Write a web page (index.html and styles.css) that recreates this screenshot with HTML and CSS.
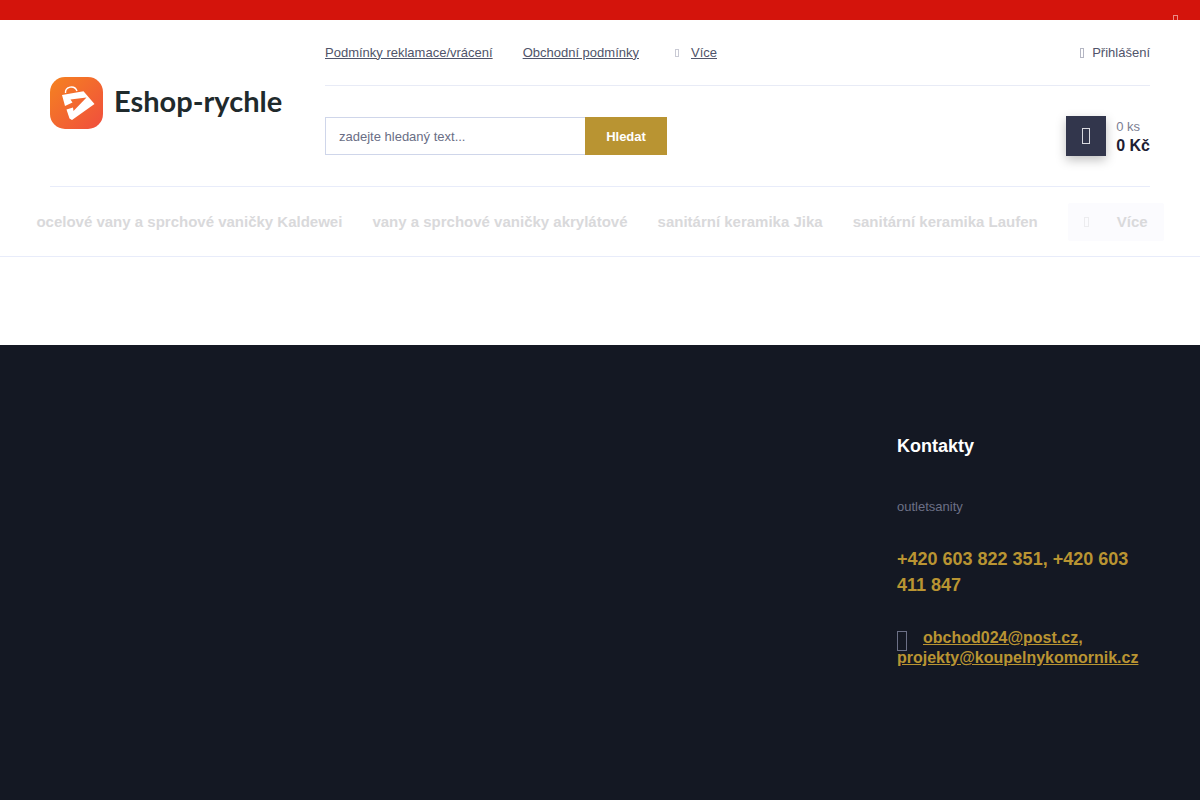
FILE: index.html
```html
<!DOCTYPE html>
<html lang="cs">
<head>
    <meta charset="UTF-8">
    <meta name="viewport" content="width=device-width, initial-scale=1.0">
    <title>Eshop-rychle</title>
    <link rel="stylesheet" href="styles.css">
</head>
<body>

    <div class="notice">
        <button type="button" class="notice-close" aria-label="Zavřít"><span class="glyph"></span></button>
    </div>

    <header class="header">
        <a href="#" class="logo">
            <svg class="logo-mark" viewBox="0 0 53 53" aria-hidden="true">
                <defs>
                    <linearGradient id="logo-fill" x1="0" y1="0" x2="1" y2="1">
                        <stop offset="0" stop-color="#f58220"/>
                        <stop offset="1" stop-color="#f04e3e"/>
                    </linearGradient>
                </defs>
                <rect width="53" height="52" rx="15" fill="url(#logo-fill)"/>
                <path d="M15.500 16C15 9.500 24.500 7.500 27 14" fill="none" stroke="#fff" stroke-width="1.400"/>
                <path d="M12 18L33.500 14.300L44.500 27L22 43L19.500 41.500L16.500 32.500L23 30.500L23.500 34L36.500 20.500L20.500 22.500L22.500 25.500L15 29Z" fill="#fff"/>
            </svg>
            <span class="logo-text">Eshop-rychle</span>
        </a>

        <div class="header-main">
            <div class="header-top">
                <nav class="info-links">
                    <a href="#">Podmínky reklamace/vrácení</a>
                    <a href="#">Obchodní podmínky</a>
                    <div class="info-more"><span class="glyph"></span><a href="#">Více</a></div>
                </nav>
                <a href="#" class="login"><span class="glyph"></span>Přihlášení</a>
            </div>
            <div class="header-bottom">
                <form class="search">
                    <input type="text" placeholder="zadejte hledaný text..." aria-label="Hledat">
                    <button type="submit">Hledat</button>
                </form>
                <a href="#" class="cart">
                    <span class="cart-icon"><span class="glyph"></span></span>
                    <span class="cart-info">
                        <span class="cart-count">0 ks</span>
                        <strong class="cart-price">0 Kč</strong>
                    </span>
                </a>
            </div>
        </div>
    </header>

    <nav class="menu">
        <a href="#">ocelové vany a sprchové vaničky Kaldewei</a>
        <a href="#">vany a sprchové vaničky akrylátové</a>
        <a href="#">sanitární keramika Jika</a>
        <a href="#">sanitární keramika Laufen</a>
        <a href="#" class="menu-more"><span class="glyph"></span>Více</a>
    </nav>

    <footer class="footer">
        <div class="contacts">
            <h2>Kontakty</h2>
            <p class="contact-name">outletsanity</p>
            <p class="contact-phone">+420 603 822 351, +420 603 411 847</p>
            <p class="contact-mail"><span class="glyph"></span><a href="#">obchod024@post.cz, projekty@koupelnykomornik.cz</a></p>
        </div>
    </footer>

</body>
</html>
```
FILE: styles.css
```css
* {
    box-sizing: border-box;
}
body {
    margin: 0;
    min-height: 100vh;
    display: flex;
    flex-direction: column;
    font-family: "Liberation Sans", Arial, sans-serif;
    font-size: 13px;
    line-height: 20px;
    color: #50546a;
    background: #fff;
}
a {
    color: inherit;
}

/* empty icon box */
.glyph {
    display: inline-block;
    flex: none;
    width: 4px;
    height: 8px;
    border: 1px solid currentColor;
}

.notice {
    height: 20px;
    padding: 14px 22px 0;
    overflow: hidden;
    text-align: right;
    background: #d4140c;
}
.notice-close {
    display: inline-block;
    padding: 0;
    border: 0;
    background: none;
    color: #ea8a86;
    line-height: 10px;
    vertical-align: top;
    cursor: pointer;
}
.notice-close .glyph {
    width: 5px;
}

.header {
    display: flex;
    gap: 40px;
    margin: 0 50px;
    border-bottom: 1px solid #e8ecfa;
}
.logo {
    display: flex;
    align-items: center;
    gap: 11px;
    width: 235px;
    text-decoration: none;
}
.logo-mark {
    flex: none;
    width: 53px;
    height: 53px;
}
.logo-text {
    padding-bottom: 4px;
    font-family: Lato, sans-serif;
    font-size: 29px;
    line-height: 36px;
    font-weight: bold;
    color: #1f2a2c;
    white-space: nowrap;
}
.header-main {
    flex: 1;
}
.header-top {
    display: flex;
    justify-content: space-between;
    align-items: center;
    height: 66px;
    border-bottom: 1px solid #e8ebf6;
}
.info-links {
    display: flex;
    gap: 30px;
}
.info-more {
    display: flex;
    align-items: center;
    gap: 12px;
    padding-left: 6px;
}
.info-more .glyph {
    color: #c9cad4;
}
.login {
    display: flex;
    align-items: center;
    gap: 8px;
    text-decoration: none;
}
.login .glyph {
    height: 10px;
    color: #b4b6c3;
}
.header-bottom {
    display: flex;
    justify-content: space-between;
    align-items: center;
    height: 100px;
}
.search {
    display: flex;
    width: 342px;
    height: 38px;
}
.search input {
    flex: 1;
    min-width: 0;
    padding: 2px 13px 0;
    border: 1px solid #cfd6ea;
    border-right: 0;
    border-radius: 0;
    font: inherit;
    color: #50546a;
}
.search input::placeholder {
    color: #6a6e85;
    opacity: 1;
}
.search button {
    width: 82px;
    padding: 2px 0 0;
    border: 0;
    font: inherit;
    font-weight: bold;
    color: #fff;
    background: #b99432;
    cursor: pointer;
}
.cart {
    display: flex;
    align-items: center;
    gap: 10px;
    text-decoration: none;
}
.cart-icon {
    display: flex;
    align-items: center;
    justify-content: center;
    width: 40px;
    height: 40px;
    color: #d9dae0;
    background: #32364c;
    box-shadow: 0 4px 10px rgba(0, 0, 0, 0.25);
}
.cart-icon .glyph {
    width: 8px;
    height: 16px;
}
.cart-info {
    display: flex;
    flex-direction: column;
    padding-top: 2px;
}
.cart-count {
    line-height: 18px;
    color: #7b7e92;
}
.cart-price {
    font-size: 16px;
    color: #1d2033;
}

.menu {
    display: flex;
    justify-content: center;
    align-items: center;
    gap: 30px;
    height: 70px;
    border-bottom: 1px solid #e8ecfa;
    font-size: 15px;
    font-weight: bold;
    color: #d9d9db;
    white-space: nowrap;
}
.menu a {
    text-decoration: none;
}
.menu-more {
    display: flex;
    align-items: center;
    gap: 28px;
    height: 38px;
    padding: 0 16px;
    border-radius: 2px;
    background: #fbfbfe;
}
.menu-more .glyph {
    width: 5px;
    height: 10px;
    color: #ececef;
}

.footer {
    flex: 1;
    display: flex;
    justify-content: flex-end;
    margin-top: 88px;
    padding: 88px 50px;
    background: #141823;
}
.contacts {
    width: 253px;
}
.contacts h2 {
    margin: 0 0 38px;
    font-size: 18px;
    line-height: 26px;
    color: #fff;
}
.contacts p {
    margin: 0;
}
.contact-name {
    color: #6c7086;
}
.contacts .contact-phone {
    margin: 29px 0 30px;
    font-size: 18px;
    line-height: 26px;
    font-weight: bold;
    color: #b99432;
}
.contact-mail {
    font-size: 16px;
    font-weight: bold;
    color: #b99432;
}
.contact-mail .glyph {
    float: left;
    width: 10px;
    height: 20px;
    margin: 3px 16px -4px 0;
    color: #6c7086;
}
```
